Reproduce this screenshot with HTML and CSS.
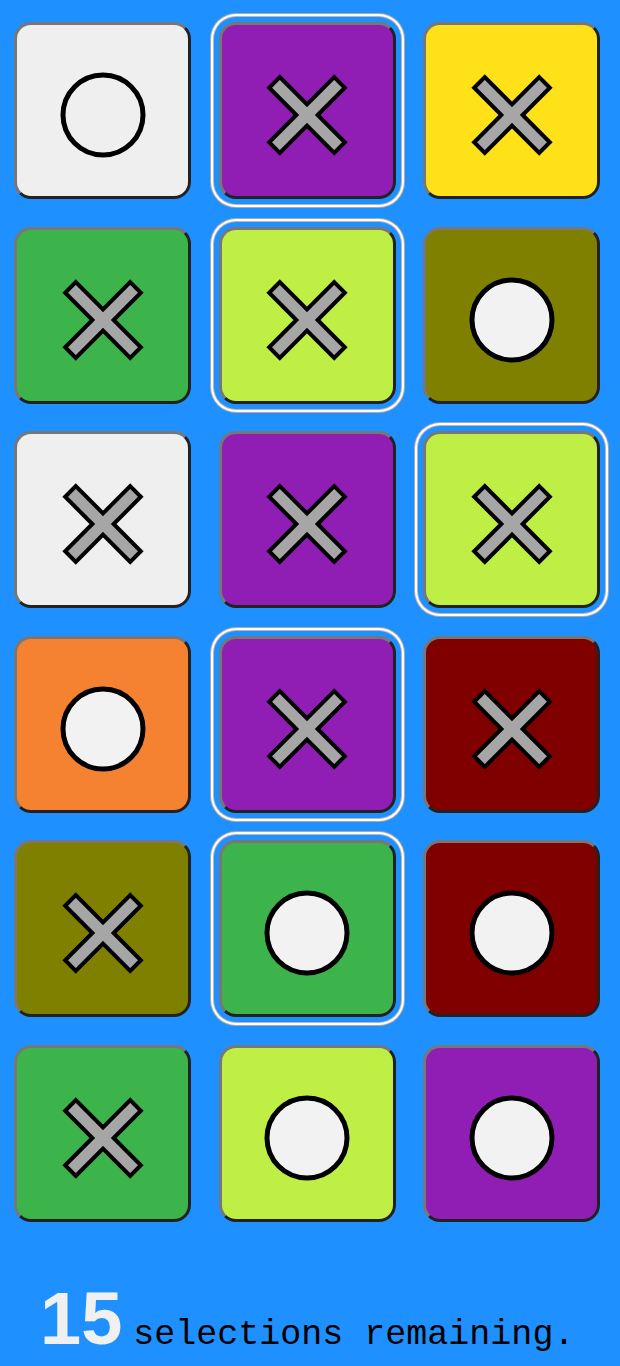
FILE: index.html
```html
<html>
    <head>
        <title>Selections</title>
        <link rel="stylesheet" href="styles.css">
    </head>
    <body>
        <!--Simbolos reutilizables para las casillas-->
        <svg class="defs" width="0" height="0">
            <symbol id="cruz" viewBox="-42 -42 84 84">
                <polygon transform="rotate(45)" points="-7.5,-46 7.5,-46 7.5,-7.5 46,-7.5 46,7.5 7.5,7.5 7.5,46 -7.5,46 -7.5,7.5 -46,7.5 -46,-7.5 -7.5,-7.5"/>
            </symbol>
            <symbol id="circulo" viewBox="-44 -44 88 88">
                <circle r="40"/>
            </symbol>
        </svg>

        <div class="tablero">
            <div class="casilla blanco"><svg class="marca o vacio"><use href="#circulo"/></svg></div>
            <div class="casilla morado elegida"><svg class="marca x"><use href="#cruz"/></svg></div>
            <div class="casilla amarillo"><svg class="marca x"><use href="#cruz"/></svg></div>

            <div class="casilla verde"><svg class="marca x"><use href="#cruz"/></svg></div>
            <div class="casilla lima elegida"><svg class="marca x"><use href="#cruz"/></svg></div>
            <div class="casilla oliva"><svg class="marca o"><use href="#circulo"/></svg></div>

            <div class="casilla blanco"><svg class="marca x"><use href="#cruz"/></svg></div>
            <div class="casilla morado"><svg class="marca x"><use href="#cruz"/></svg></div>
            <div class="casilla lima elegida"><svg class="marca x"><use href="#cruz"/></svg></div>

            <div class="casilla naranja"><svg class="marca o"><use href="#circulo"/></svg></div>
            <div class="casilla morado elegida"><svg class="marca x"><use href="#cruz"/></svg></div>
            <div class="casilla granate"><svg class="marca x"><use href="#cruz"/></svg></div>

            <div class="casilla oliva"><svg class="marca x"><use href="#cruz"/></svg></div>
            <div class="casilla verde elegida"><svg class="marca o"><use href="#circulo"/></svg></div>
            <div class="casilla granate"><svg class="marca o"><use href="#circulo"/></svg></div>

            <div class="casilla verde"><svg class="marca x"><use href="#cruz"/></svg></div>
            <div class="casilla lima"><svg class="marca o"><use href="#circulo"/></svg></div>
            <div class="casilla morado"><svg class="marca o"><use href="#circulo"/></svg></div>
        </div>

        <div class="contador">
            <span class="numero">15</span>
            <span class="texto">selections remaining.</span>
        </div>
    </body>
</html>
```

FILE: styles.css
```css
body
{
    margin: 0;
    background-color: #1e90ff;
}
.defs
{
    position: absolute;
}
.tablero
{
    display: grid;
    grid-template-columns: repeat(3, 177px);
    grid-auto-rows: 177px;
    column-gap: 27.5px;
    row-gap: 27.6px;
    padding: 22px 0 0 14px;
}
.casilla
{
    box-sizing: border-box;
    border: 3px solid;
    border-color: #777 #222 #222 #777;
    border-radius: 17px;
    display: flex;
    align-items: center;
    justify-content: center;
    padding-top: 9px;
}
/*Anillo blanco alrededor de las casillas elegidas*/
.elegida
{
    box-shadow: 0 0 0 5px #1e90ff, 0 0 0 6px #b8b8b8, 0 0 0 8px #fff, 0 0 0 9px #aaa;
}
.blanco { background-color: #efefef; }
.morado { background-color: #911eb4; }
.amarillo { background-color: #ffe119; }
.verde { background-color: #3cb44b; }
.lima { background-color: #bfef45; }
.oliva { background-color: #808000; }
.naranja { background-color: #f58231; }
.granate { background-color: #800000; }

.marca
{
    display: block;
}
.x
{
    width: 84px;
    height: 84px;
    fill: #a6a6a6;
    stroke: #000;
    stroke-width: 4;
}
.o
{
    width: 88px;
    height: 88px;
    fill: #f2f2f2;
    stroke: #000;
    stroke-width: 5;
}
.vacio
{
    fill: #efefef;
}

.contador
{
    display: flex;
    align-items: baseline;
    padding: 59px 0 0 40px;
}
.numero
{
    font-family: "Liberation Sans", Arial, sans-serif;
    font-weight: bold;
    font-size: 74px;
    line-height: 75px;
    color: #f0f0f0;
    margin-right: 11px;
}
.texto
{
    font-family: "Liberation Mono", "Courier New", monospace;
    font-size: 35px;
    color: #000;
}
```
